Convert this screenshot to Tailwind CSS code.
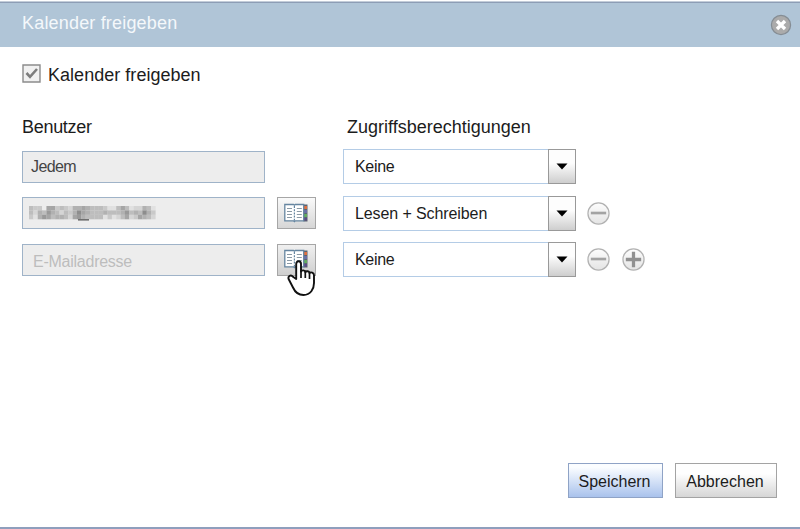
<!DOCTYPE html>
<html lang="de">
  <head>
    <meta charset="utf-8" />
    <title>Kalender freigeben</title>
    <script src="https://cdn.jsdelivr.net/npm/@tailwindcss/browser@4"></script>
  </head>
  <body class="bg-white">
    <svg class="absolute h-0 w-0">
      <defs>
        <linearGradient id="round" x1="0" y1="0" x2="0" y2="1">
          <stop offset="0" stop-color="#fdfdfd" />
          <stop offset="1" stop-color="#e4e4e4" />
        </linearGradient>
      </defs>
      <symbol id="book" viewBox="0 0 24 20">
        <path d="M19.5 1.5h4v17h-4z" fill="#59636f" />
        <path d="M20 3h3v3h-3z" fill="#e0703f" />
        <path d="M20 7h3v3h-3z" fill="#6a6ea8" />
        <path d="M20 11h3v3h-3z" fill="#62ad5d" />
        <path d="M20 15h3v2.500h-3z" fill="#5d4a85" />
        <path d="M.8 1.500h8.700l.9.700.9-.7h8.400v16.300h-8.400l-.9.900-.9-.9H.8z" fill="#fff" stroke="#6585a0" stroke-width="1.300" />
        <path d="M10.400 3v15" stroke="#6585a0" stroke-width="1.200" stroke-dasharray="2 1.200" />
        <path d="M3 5.500h5M3 8.500h5M3 11.500h5M3 14.500h5M12.800 5.500h5M12.800 8.500h5M12.800 11.500h5M12.800 14.500h5" stroke="#8b9aa6" stroke-width="1" />
      </symbol>
      <symbol id="minus" viewBox="0 0 24 24">
        <circle cx="12" cy="12" r="11" fill="url(#round)" stroke="#b2b2b2" stroke-width="1.300" />
        <path d="M4 11.500h16" stroke="#a3a3a3" stroke-width="2.800" />
      </symbol>
      <symbol id="plus" viewBox="0 0 24 24">
        <circle cx="12" cy="12" r="11" fill="url(#round)" stroke="#b2b2b2" stroke-width="1.300" />
        <path d="M4 12h16M12 4v16" stroke="#909090" stroke-width="3.400" />
      </symbol>
      <symbol id="arrow" viewBox="0 0 12 7">
        <path d="M.5.5h11L6 6.500z" fill="#000" />
      </symbol>
    </svg>

    <div class="flex h-[529px] w-[800px] flex-col overflow-hidden border-t border-white font-['Liberation_Sans',Arial,sans-serif] text-[#1c1c1c]">
      <div class="h-px shrink-0 bg-[#c3cdd9]"></div>
      <div class="flex h-[45px] shrink-0 items-center justify-between border-t border-[#8d9db5] bg-[#b0c5d7] pr-[8px] pl-[22px]">
        <h1 class="-mt-[4px] text-[18px] tracking-[0.18px] text-[#f4f8fb]">Kalender freigeben</h1>
        <svg class="h-[22px] w-[22px]" viewBox="0 0 22 22">
          <circle cx="11" cy="11" r="9.600" fill="#ababab" stroke="#858d94" stroke-width="1.200" />
          <path d="M7 7l8 8M15 7l-8 8" stroke="#fff" stroke-width="3.400" />
        </svg>
      </div>

      <div class="flex grow flex-col border-b-2 border-[#8f9fbd] pr-[23px] pl-[22px]">
        <label class="mt-[17px] flex h-[22px] items-center">
          <svg class="-mt-[3px] h-[19px] w-[19px]" viewBox="0 0 19 19">
            <path d="M1 1h17v17H1z" fill="#f1f1f1" stroke="#8c8c8c" stroke-width="1.400" />
            <path d="M4.500 9l3.500 3.800 7-7.800" fill="none" stroke="#7d7d7d" stroke-width="2.600" />
          </svg>
          <span class="mt-px ml-[7px] text-[18px] tracking-[0.03px]">Kalender freigeben</span>
        </label>

        <div class="mt-[29px] flex h-[24px] items-center text-[18px]">
          <span class="w-[325px] tracking-[-0.3px]">Benutzer</span>
          <span>Zugriffsberechtigungen</span>
        </div>

        <div class="mt-[10px] flex flex-col gap-[11.5px] text-[16px]">
          <div class="flex h-[35px] items-center">
            <div class="mr-[78px] flex h-[32px] w-[243px] items-center border border-[#9fb3c8] bg-[#ededed] pl-[8px] tracking-[-0.6px] text-[#444]">Jedem</div>
            <div class="flex h-[35px] w-[233px] border border-[#b4cce6] pl-[11px]">
              <span class="grow self-center tracking-[-0.3px]">Keine</span>
              <span class="-my-px -mr-px flex w-[28px] items-center justify-center border border-[#999] bg-linear-to-b from-[#fdfdfd] from-40% to-[#cecece]">
                <svg class="h-[7px] w-[12px]"><use href="#arrow" /></svg>
              </span>
            </div>
          </div>

          <div class="flex h-[35px] items-center">
            <div class="mr-[12px] flex h-[32px] w-[243px] items-center border border-[#9fb3c8] bg-[#ededed] pl-[6px]">
              <svg id="masked" class="h-[15px] w-[127px]" viewBox="0 0 127 15"></svg>
            </div>
            <button class="mr-[27px] flex h-[32px] w-[39px] items-center justify-center border border-[#a6a6a6] bg-linear-to-b from-[#fafafa] to-[#d6d6d6] pr-[2px]">
              <svg class="-mt-px h-[20px] w-[24px]"><use href="#book" /></svg>
            </button>
            <div class="mr-[11px] flex h-[35px] w-[233px] border border-[#b4cce6] pl-[11px]">
              <span class="mt-px grow self-center tracking-[-0.1px]">Lesen + Schreiben</span>
              <span class="-my-px -mr-px flex w-[28px] items-center justify-center border border-[#999] bg-linear-to-b from-[#fdfdfd] from-40% to-[#cecece]">
                <svg class="h-[7px] w-[12px]"><use href="#arrow" /></svg>
              </span>
            </div>
            <svg class="h-[23px] w-[23px]"><use href="#minus" /></svg>
          </div>

          <div class="flex h-[35px] items-center">
            <div class="mr-[12px] flex h-[32px] w-[243px] items-center border border-[#9fb3c8] bg-[#ededed] pt-[4px] pl-[10px] tracking-[-0.25px] text-[#bdbdbd]">E-Mailadresse</div>
            <button class="relative mr-[27px] flex h-[32px] w-[39px] items-center justify-center border border-[#a6a6a6] bg-linear-to-b from-[#f0f0f0] to-[#cfcfcf] pr-[2px]">
              <svg class="-mt-px h-[20px] w-[24px]"><use href="#book" /></svg>
              <!-- hand pointer -->
              <svg class="absolute top-[15px] left-[9px] h-[37px] w-[29px]" viewBox="0 0 29 37">
                <path d="M9.200 19V4c0-3.600 4.800-3.600 4.800 0v7.500c.8-1.700 4-1.400 4.300.6 1-1.500 3.900-1 4.200.9 1.200-1.200 4.500-.6 4.500 2.300V23c0 6-3.500 12-10.500 12-5.500 0-8.500-3-10.500-7.500L1.600 19c-1-3 2.400-4.700 4.400-2.200z" fill="#fff" stroke="#111" stroke-width="1.900" stroke-linejoin="round" />
                <path d="M14 10.500V18M18.300 12V18M22.500 13v6" stroke="#111" stroke-width="1.700" />
              </svg>
            </button>
            <div class="mr-[11px] flex h-[35px] w-[233px] border border-[#b4cce6] pl-[11px]">
              <span class="grow self-center tracking-[-0.3px]">Keine</span>
              <span class="-my-px -mr-px flex w-[28px] items-center justify-center border border-[#999] bg-linear-to-b from-[#fdfdfd] from-40% to-[#cecece]">
                <svg class="h-[7px] w-[12px]"><use href="#arrow" /></svg>
              </span>
            </div>
            <svg class="h-[23px] w-[23px]"><use href="#minus" /></svg>
            <svg class="ml-[12px] h-[23px] w-[23px]"><use href="#plus" /></svg>
          </div>
        </div>

        <div class="mt-auto mb-[29px] flex justify-end gap-[12px] text-[16px]">
          <button class="h-[35px] w-[95px] border border-[#8fa3c6] bg-linear-to-b from-[#fbfdff] from-10% to-[#a9c2ec] pt-[2px] pr-[2px]">Speichern</button>
          <button class="h-[35px] w-[102px] border border-[#a3a3a3] bg-linear-to-b from-[#fefefe] from-30% to-[#d6d6d6] pt-[2px] pr-[2px]">Abbrechen</button>
        </div>
      </div>
    </div>

    <script>
      // pixelated address, one digit per block, 0 = background
      const rows = [
        '43306634325565444311464122541',
        '42547542435865444544457454853',
        '31576455426754444131246236542'
      ]
      let blocks = ''
      rows.forEach((row, y) => {
        row.split('').forEach((v, x) => {
          const c = 237 - v * 12
          blocks += `<rect x="${x * 4.36}" y="${y * 4.4}" width="4.5" height="4.5" fill="rgb(${c},${c},${c})" />`
        })
      })
      blocks += '<rect x="49" y="13.2" width="11" height="1.3" fill="#555" />'
      document.querySelector('#masked').innerHTML = blocks
    </script>
  </body>
</html>
